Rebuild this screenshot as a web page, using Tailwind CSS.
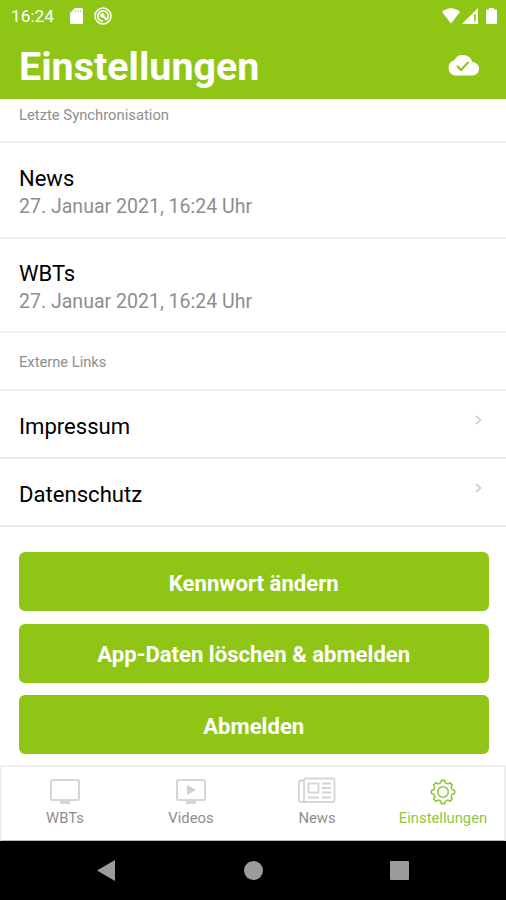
<!DOCTYPE html>
<html lang="de">
  <head>
    <meta charset="UTF-8" />
    <meta name="viewport" content="width=device-width, initial-scale=1.0" />
    <script src="https://cdn.jsdelivr.net/npm/@tailwindcss/browser@4"></script>
    <title>Einstellungen</title>
  </head>

  <body class="bg-white font-[Roboto,sans-serif] text-black">
    <div class="flex flex-col w-[506px] h-[900px] overflow-hidden">
      <header class="h-[99px] shrink-0 bg-[#8fc615] text-white">
        <!-- Status bar -->
        <div class="flex h-8 items-center pl-[11px] pr-2">
          <span class="text-[17.3px] leading-8 w-[59px]">16:24</span>
          <svg class="w-[13px] h-4" viewBox="0 0 13 16">
            <path d="M5 0h6.5A1.5 1.5 0 0 1 13 1.5v13a1.5 1.5 0 0 1-1.5 1.5h-10A1.5 1.5 0 0 1 0 14.500V5z" fill="currentColor" />
            <path d="M5.500 2v2M8 2v2M10.500 2v2" stroke="#8fc615" stroke-opacity=".6" stroke-width="1" />
          </svg>
          <svg class="ml-[11px] w-[18px] h-[18px]" viewBox="0 0 18 18" fill="none" stroke="currentColor">
            <circle cx="9" cy="9" r="8" stroke-width="1.600" />
            <path d="M13.300 12A5.200 5.200 0 1 0 9 14.200" stroke-width="1.700" />
            <path d="M7.500 7.500l5.500 5.500" stroke-width="2.200" />
            <circle cx="8.300" cy="8.300" r="1.700" stroke-width="1.200" />
          </svg>
          <svg class="ml-auto w-[18px] h-4" viewBox="0 0 18 16">
            <path d="M0 4Q4 .3 9 .3T18 4L9 15.500z" fill="currentColor" />
          </svg>
          <svg class="ml-0.5 w-4 h-4" viewBox="0 0 16 16">
            <path d="M16 0v16H0z" fill="currentColor" />
            <path d="M12.900 6v7.500" stroke="#8fc615" stroke-width="1.600" />
          </svg>
          <svg class="ml-2 mr-px w-[11px] h-4" viewBox="0 0 11 16">
            <path d="M3 0h5v1.500h2a1 1 0 0 1 1 1V15a1 1 0 0 1-1 1H1a1 1 0 0 1-1-1V2.500a1 1 0 0 1 1-1h2z" fill="currentColor" />
          </svg>
        </div>
        <div class="flex h-[67px] items-center justify-between pl-[19px] pr-[27px]">
          <h1 class="pt-0.5 text-[39.4px] leading-[67px] font-bold">Einstellungen</h1>
          <svg class="mb-[2px] w-8 h-[23px]" viewBox="0 0 32 23">
            <path d="M8 22.500A8 7.900 0 0 1 7.200 7.200 9.800 9.800 0 0 1 25.300 8.900 6.800 6.800 0 0 1 25.300 22.500z" fill="currentColor" />
            <path d="M10 13l4 4 7.500-8" fill="none" stroke="#8fc615" stroke-width="2.200" />
          </svg>
        </div>
      </header>

      <main class="flex flex-col h-[666px] shrink-0">
        <div class="h-[44px] border-b-2 border-[#f0f0f0] px-[19px] text-[14.8px] leading-8 text-[#8e8e8e]">Letzte Synchronisation</div>
        <div class="h-[96px] border-b-2 border-[#f0f0f0] px-[19px] pt-[22px]">
          <p class="text-[22px] leading-7">News</p>
          <p class="text-[19.55px] leading-7 text-[#8e8e8e]">27. Januar 2021, 16:24 Uhr</p>
        </div>
        <div class="h-[94px] border-b-2 border-[#f0f0f0] px-[19px] pt-[21px]">
          <p class="text-[22px] leading-7">WBTs</p>
          <p class="text-[19.55px] leading-7 text-[#8e8e8e]">27. Januar 2021, 16:24 Uhr</p>
        </div>
        <div class="h-[58px] border-b-2 border-[#f0f0f0] px-[19px] text-[14.7px] leading-[59px] text-[#8e8e8e]">Externe Links</div>
        <div class="flex justify-between h-[68px] border-b-2 border-[#ececec] pl-[19px] pr-6">
          <span class="text-[22.1px] leading-[70px]">Impressum</span>
          <svg class="mt-6 w-[7px] h-[10px]" viewBox="0 0 7 10"><path d="M1 1l4.500 4L1 9" fill="none" stroke="#c4c4c4" stroke-width="1.500" /></svg>
        </div>
        <div class="flex justify-between h-[68px] border-b-2 border-[#ececec] pl-[19px] pr-6">
          <span class="text-[22.1px] leading-[70px]">Datenschutz</span>
          <svg class="mt-6 w-[7px] h-[10px]" viewBox="0 0 7 10"><path d="M1 1l4.500 4L1 9" fill="none" stroke="#c4c4c4" stroke-width="1.500" /></svg>
        </div>
        <div class="flex flex-col gap-[12.5px] pt-[25px] pl-[19px] pr-[17.5px] text-[22.1px] font-bold text-white">
          <button class="h-[59px] rounded-md bg-[#8fc615] pt-1">Kennwort ändern</button>
          <button class="h-[59px] rounded-md bg-[#8fc615] pt-[3px]">App-Daten löschen &amp; abmelden</button>
          <button class="h-[59px] rounded-md bg-[#8fc615] pt-1">Abmelden</button>
        </div>
      </main>

      <!-- Tab bar -->
      <nav class="grid grid-cols-[126px_126px_126px_126px] h-[76px] shrink-0 border-2 border-b border-[#efefef] border-b-[#bbb] text-[14.8px] leading-[22px] text-[#8e8e8e]">
        <a class="flex flex-col items-center pt-2.5">
          <svg class="w-[38px] h-[30px]" viewBox="0 0 38 30">
            <rect x="5" y="3" width="28" height="20" rx="1.500" fill="none" stroke="#d6d6d6" stroke-width="2" />
            <path d="M14 25.500h10" stroke="#d6d6d6" stroke-width="3" />
          </svg>
          <span>WBTs</span>
        </a>
        <a class="flex flex-col items-center pt-2.5">
          <svg class="w-[38px] h-[30px]" viewBox="0 0 38 30">
            <rect x="5" y="3" width="28" height="20" rx="1.500" fill="none" stroke="#d6d6d6" stroke-width="2" />
            <path d="M14 25.500h10" stroke="#d6d6d6" stroke-width="3" />
            <path d="M15 8l9 5-9 5z" fill="#cfcfcf" />
          </svg>
          <span>Videos</span>
        </a>
        <a class="flex flex-col items-center pt-2.5">
          <svg class="w-[38px] h-[30px]" viewBox="0 0 38 30" fill="none" stroke="#d4d4d4" stroke-width="1.800">
            <path d="M6 3.500H2.500a1.500 1.500 0 0 0-1.500 1.500v17.500a2.500 2.500 0 0 0 3 2.500h30a2.500 2.500 0 0 0 2.500-2.500V3a1.500 1.500 0 0 0-1.500-1.500H8A1.500 1.500 0 0 0 6 3v20q0 2-2 2" />
            <rect x="10.500" y="6.500" width="10" height="9" />
            <path d="M24 6.500h9M24 11h9M24 15.500h9M10 20.500h11M24 20.500h9" />
          </svg>
          <span>News</span>
        </a>
        <a class="flex flex-col items-center pt-2.5 text-[#8fc63f]">
          <svg class="w-[38px] h-[30px]" viewBox="-19 -15 38 30" fill="none" stroke="currentColor" stroke-width="1.600">
            <!-- one tooth, repeated every 45 degrees -->
            <g id="tooth"><path d="M-2.400-9L-1.500-11.600H1.500L2.400-9Q3.600-8.700 4.670-8.060" /></g>
            <use href="#tooth" transform="rotate(45)" />
            <use href="#tooth" transform="rotate(90)" />
            <use href="#tooth" transform="rotate(135)" />
            <use href="#tooth" transform="rotate(180)" />
            <use href="#tooth" transform="rotate(225)" />
            <use href="#tooth" transform="rotate(270)" />
            <use href="#tooth" transform="rotate(315)" />
            <circle r="5.300" />
          </svg>
          <span>Einstellungen</span>
        </a>
      </nav>

      <!-- Android buttons -->
      <div class="flex h-[59px] shrink-0 items-center bg-black pl-[97px]">
        <svg class="w-[18px] h-[21px]" viewBox="0 0 18 21"><path d="M18 0v21L0 10.500z" fill="#9c9c9c" /></svg>
        <div class="ml-[129px] size-[19px] rounded-full bg-[#9c9c9c]"></div>
        <div class="ml-[127px] size-[19px] rounded-[1px] bg-[#9c9c9c]"></div>
      </div>
    </div>
  </body>
</html>
